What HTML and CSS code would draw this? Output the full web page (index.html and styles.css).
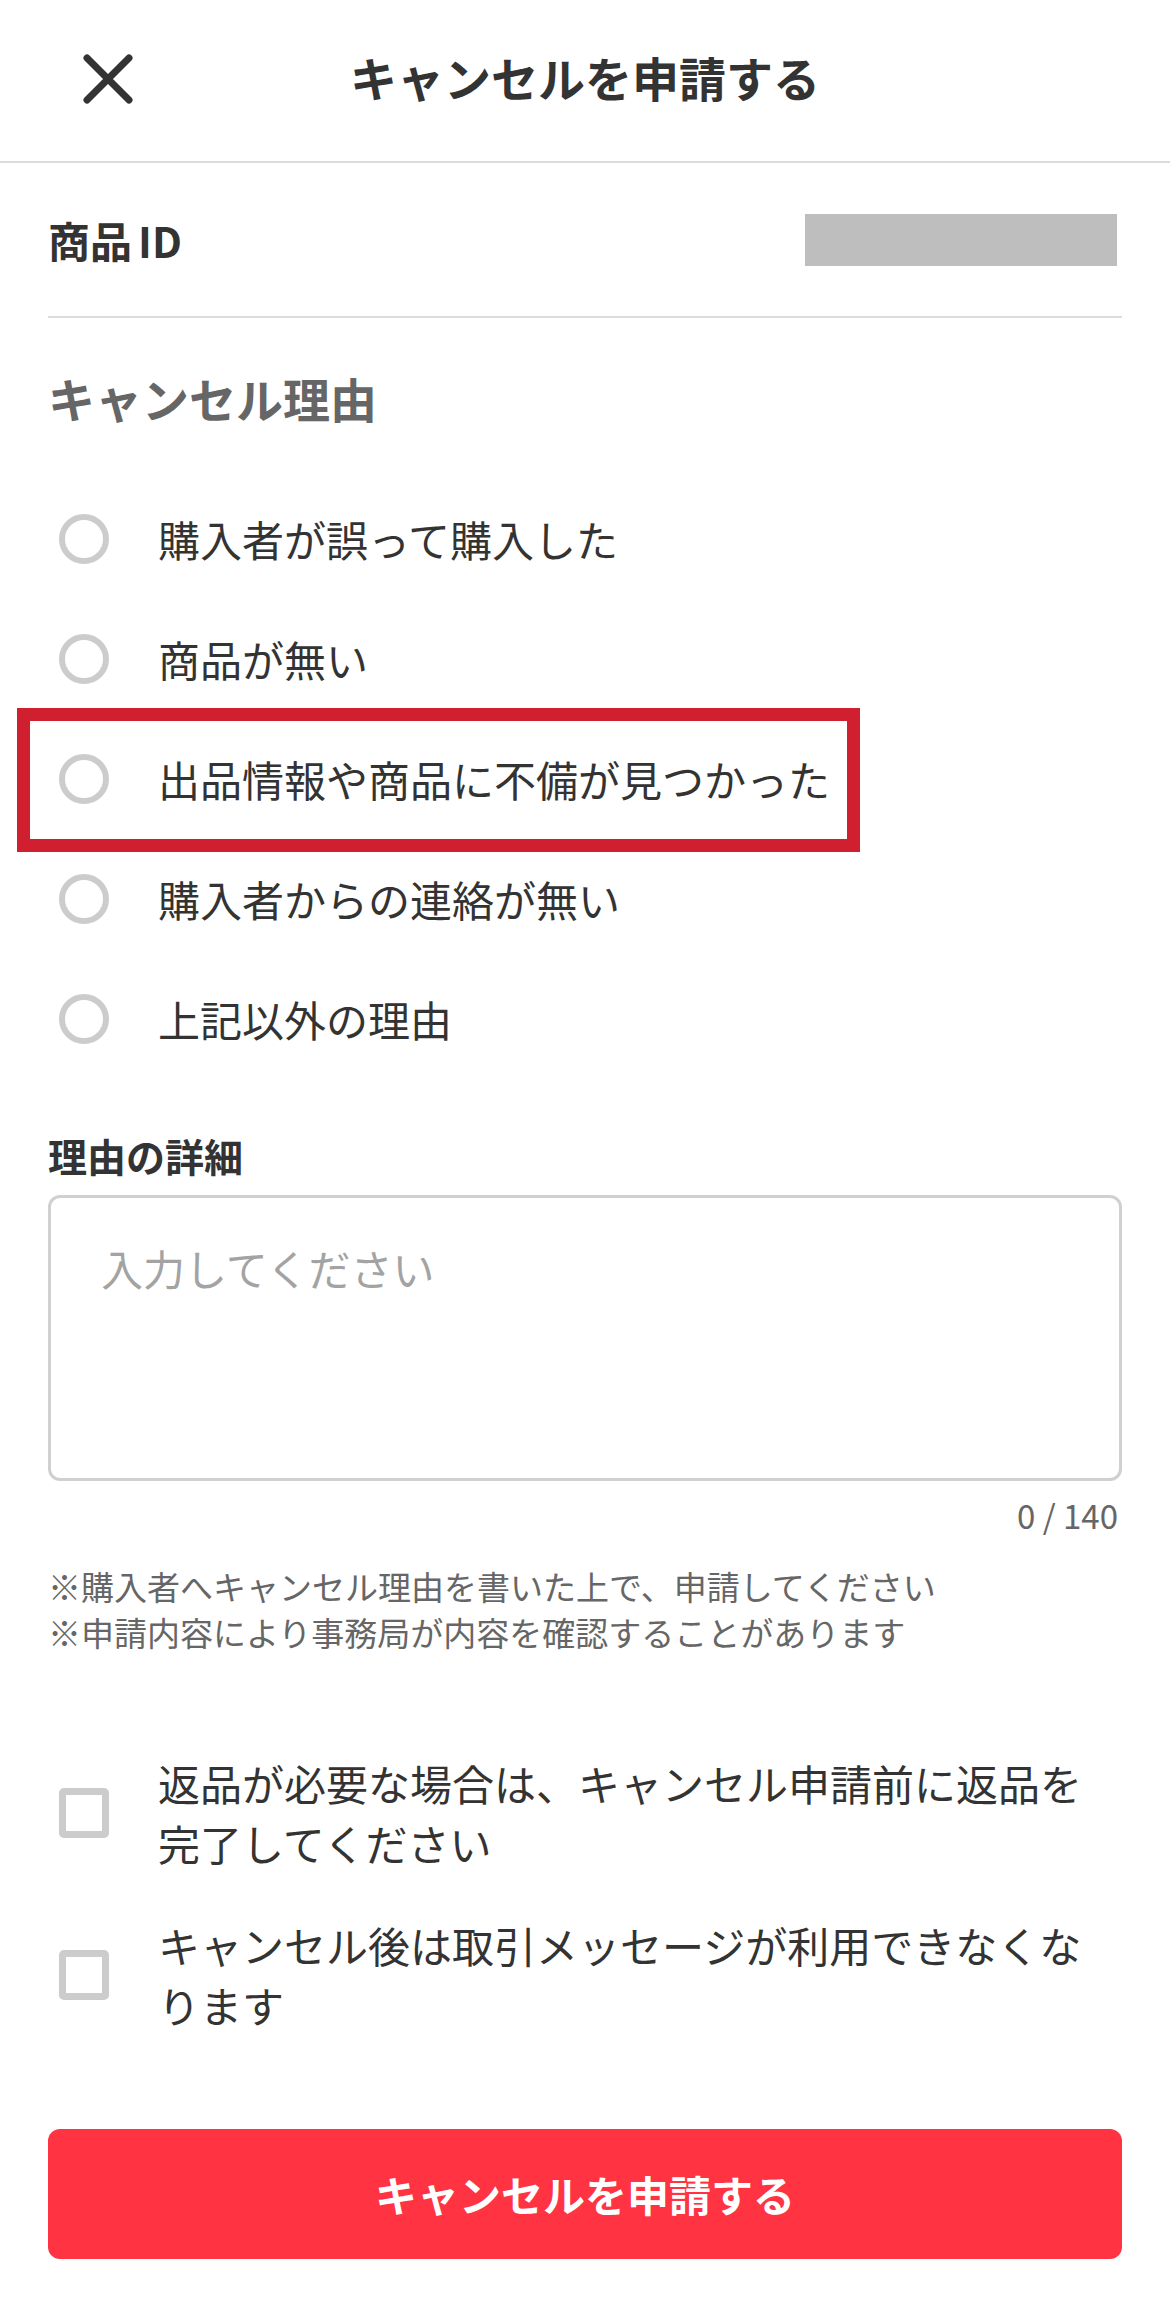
FILE: index.html
```html
<!DOCTYPE html>
<html lang="ja">
<head>
<meta charset="utf-8">
<title>キャンセルを申請する</title>
<link rel="stylesheet" href="styles.css">
</head>
<body>
<header class="header">
  <div class="header-left">
    <button class="close" aria-label="閉じる">
      <svg viewBox="0 0 52 52" width="52" height="52"><path d="M5 5L47 47M47 5L5 47" fill="none" stroke="#333" stroke-width="7" stroke-linecap="round"/></svg>
    </button>
  </div>
  <h1 class="title">キャンセルを申請する</h1>
  <div class="header-right"></div>
</header>

<main class="content">
  <div class="id-row">
    <span class="id-label">商品<span class="id-latin">ID</span></span>
    <span class="id-value"></span>
  </div>

  <h2 class="section-title">キャンセル理由</h2>

  <ul class="reasons">
    <li class="reason"><span class="radio"></span><span class="reason-text">購入者が誤って購入した</span></li>
    <li class="reason"><span class="radio"></span><span class="reason-text">商品が無い</span></li>
    <li class="reason reason-marked"><span class="radio"></span><span class="reason-text">出品情報や商品に不備が見つかった</span><span class="highlight"></span></li>
    <li class="reason"><span class="radio"></span><span class="reason-text">購入者からの連絡が無い</span></li>
    <li class="reason"><span class="radio"></span><span class="reason-text">上記以外の理由</span></li>
  </ul>

  <h3 class="detail-label">理由の詳細</h3>
  <textarea class="detail-input" placeholder="入力してください"></textarea>
  <div class="counter">0 / 140</div>

  <div class="notes">
    <p>※購入者へキャンセル理由を書いた上で、申請してください</p>
    <p>※申請内容により事務局が内容を確認することがあります</p>
  </div>

  <ul class="checks">
    <li class="check"><span class="checkbox"></span><span class="check-text">返品が必要な場合は、キャンセル申請前に返品を完了してください</span></li>
    <li class="check"><span class="checkbox"></span><span class="check-text">キャンセル後は取引メッセージが利用できなくなります</span></li>
  </ul>

  <button class="submit">キャンセルを申請する</button>
</main>
</body>
</html>
```

FILE: styles.css
```css
* { box-sizing: border-box; }

html, body {
  margin: 0;
  padding: 0;
  background: #fff;
}

body {
  width: 1170px;
  font-family: "Noto Sans CJK JP", "Noto Sans", sans-serif;
  color: #333;
}

p, ul, h1, h2, h3 { margin: 0; padding: 0; }
ul { list-style: none; }

/* Header */
.header {
  display: grid;
  grid-template-columns: 1fr auto 1fr;
  align-items: center;
  height: 163px;
  border-bottom: 2px solid #dcdcdc;
}

.header-left {
  padding-left: 82px;
  display: flex;
  align-items: center;
}

.close {
  width: 52px;
  height: 52px;
  padding: 0;
  border: 0;
  background: none;
  display: block;
  margin-top: -4px;
}

.close svg { display: block; }

.title {
  font-size: 47px;
  line-height: 60px;
  font-weight: 700;
  color: #333;
  margin-top: -8px;
}

/* Content */
.content {
  padding: 0 48px;
}

.id-row {
  display: flex;
  justify-content: space-between;
  align-items: center;
  height: 155px;
  border-bottom: 2px solid #dcdcdc;
}

.id-label {
  font-size: 42px;
  line-height: 50px;
  font-weight: 700;
  color: #333;
}

.id-latin {
  margin-left: 6px;
}

.id-value {
  width: 312px;
  height: 52px;
  background: #bebebe;
  margin-right: 5px;
}

.section-title {
  margin-top: 50px;
  font-size: 47px;
  line-height: 60px;
  font-weight: 700;
  color: #666;
}

.reasons {
  margin-top: 51px;
}

.reason {
  position: relative;
  display: flex;
  align-items: center;
  height: 120px;
}

.radio {
  flex: none;
  width: 50px;
  height: 50px;
  margin-left: 11px;
  border: 6px solid #cccccc;
  border-radius: 50%;
}

.reason-text {
  margin-left: 49px;
  font-size: 42px;
  line-height: 60px;
  color: #333;
}

.highlight {
  position: absolute;
  top: -11px;
  left: -31px;
  width: 843px;
  height: 144px;
  border: 13px solid #d01f2f;
  pointer-events: none;
}

.detail-label {
  margin-top: 51px;
  font-size: 39px;
  line-height: 50px;
  font-weight: 700;
  color: #333;
}

.detail-input {
  display: block;
  width: 100%;
  height: 286px;
  margin-top: 15px;
  padding: 40px 50px;
  border: 3px solid #d0d0d0;
  border-radius: 12px;
  font-family: "Noto Sans CJK JP", "Noto Sans", sans-serif;
  font-size: 42px;
  line-height: 60px;
  color: #333;
  resize: none;
  outline: none;
  background: #fff;
}

.detail-input::placeholder {
  color: #a3a3a3;
}

.counter {
  margin-top: 14px;
  padding-right: 4px;
  text-align: right;
  font-size: 33px;
  line-height: 40px;
  color: #666;
}

.notes {
  margin-top: 28px;
  font-size: 33px;
  line-height: 46px;
  color: #666;
}

.checks {
  margin-top: 98px;
  display: flex;
  flex-direction: column;
  gap: 42px;
}

.check {
  display: flex;
  align-items: center;
}

.checkbox {
  flex: none;
  width: 50px;
  height: 50px;
  margin-left: 11px;
  border: 7px solid #cccccc;
  border-radius: 5px;
}

.check-text {
  margin-left: 49px;
  max-width: 950px;
  font-size: 42px;
  line-height: 60px;
  color: #333;
}

.submit {
  display: block;
  width: 100%;
  height: 130px;
  margin-top: 94px;
  border: 0;
  border-radius: 12px;
  background: #ff3341;
  color: #fff;
  font-family: "Noto Sans CJK JP", "Noto Sans", sans-serif;
  font-size: 42px;
  font-weight: 700;
  line-height: 60px;
}
```
